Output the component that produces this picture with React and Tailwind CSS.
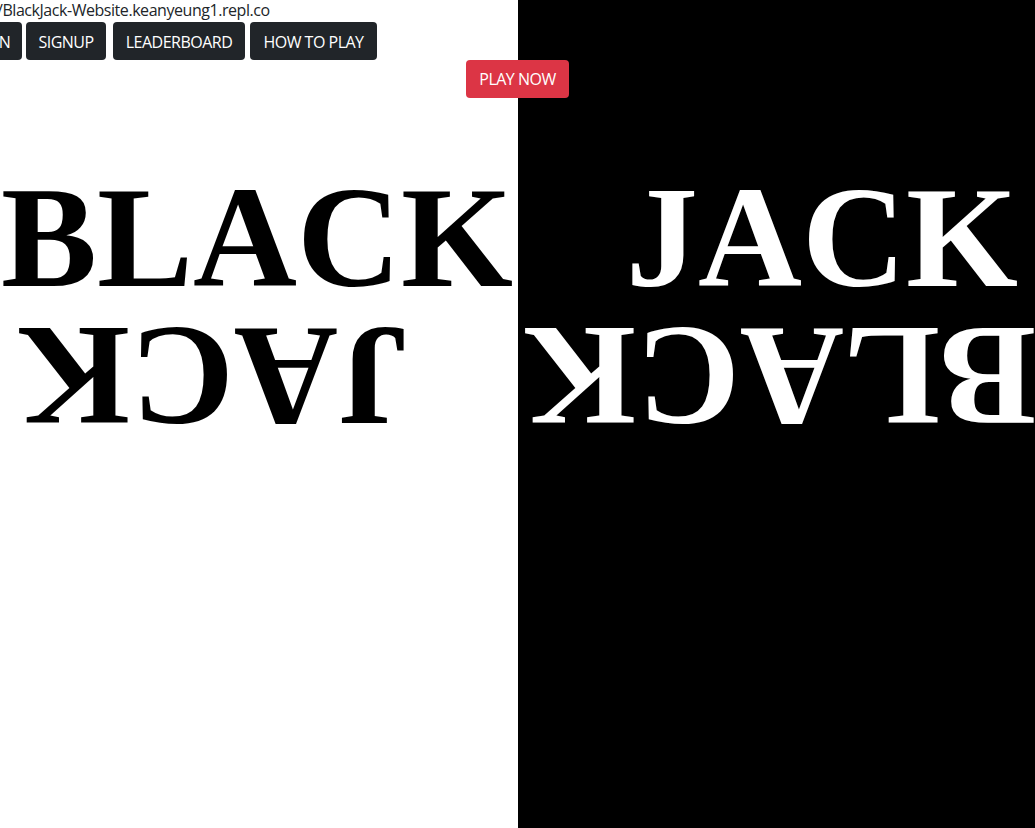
import React from 'react';

const NAV = [
  { label: 'LOGIN', cls: 'w-[70px] -ml-[48px]' },
  { label: 'SIGNUP', cls: 'w-[80px] ml-[4px]' },
  { label: 'LEADERBOARD', cls: 'w-[132px] ml-[7px]' },
  { label: 'HOW TO PLAY', cls: 'w-[127px] ml-[5px]' },
];

const sans = "font-['Open_Sans',sans-serif]";
const serif = "font-['Liberation_Serif','Times_New_Roman',serif] font-bold text-[144px]";

const Word = ({ children, flip, offset, light }) => (
  <div className="flex h-[139px]">
    <div
      className={`h-[139px] leading-[139px] w-fit whitespace-nowrap ${offset} ${flip ? 'rotate-180' : ''} ${light ? 'text-white' : 'text-black'}`}
    >
      {children}
    </div>
  </div>
);

export default function App() {
  return (
    <div className="h-[828px] w-full overflow-hidden bg-[linear-gradient(to_right,#ffffff_518px,#000000_518px)]">
      <div className={`${sans} h-[22px] leading-[20px] text-[16px] text-[#212529] -ml-[3px] tracking-[-0.45px] whitespace-nowrap`}>
        /BlackJack-Website.keanyeung1.repl.co
      </div>

      <div className="flex">
        {NAV.map((b) => (
          <button
            key={b.label}
            className={`${sans} ${b.cls} shrink-0 h-[38px] rounded-[4px] bg-[#212529] text-white text-[16px] tracking-[-0.5px] pt-[2px] flex items-center justify-center`}
          >
            {b.label}
          </button>
        ))}
      </div>

      <div className="flex justify-center">
        <button className={`${sans} w-[103px] h-[38px] rounded-[4px] bg-[#dc3545] text-white text-[16px] tracking-[-0.5px] flex items-center justify-center`}>
          PLAY NOW
        </button>
      </div>

      <div className={`grid grid-cols-[518px_1fr] mt-[70px] ${serif}`}>
        <div>
          <Word offset="ml-[1px]">BLACK</Word>
          <Word flip offset="ml-[18px]">JACK</Word>
        </div>
        <div>
          <Word light offset="ml-[108px]">JACK</Word>
          <Word light flip offset="ml-[6px]">BLACK</Word>
        </div>
      </div>
    </div>
  );
}
